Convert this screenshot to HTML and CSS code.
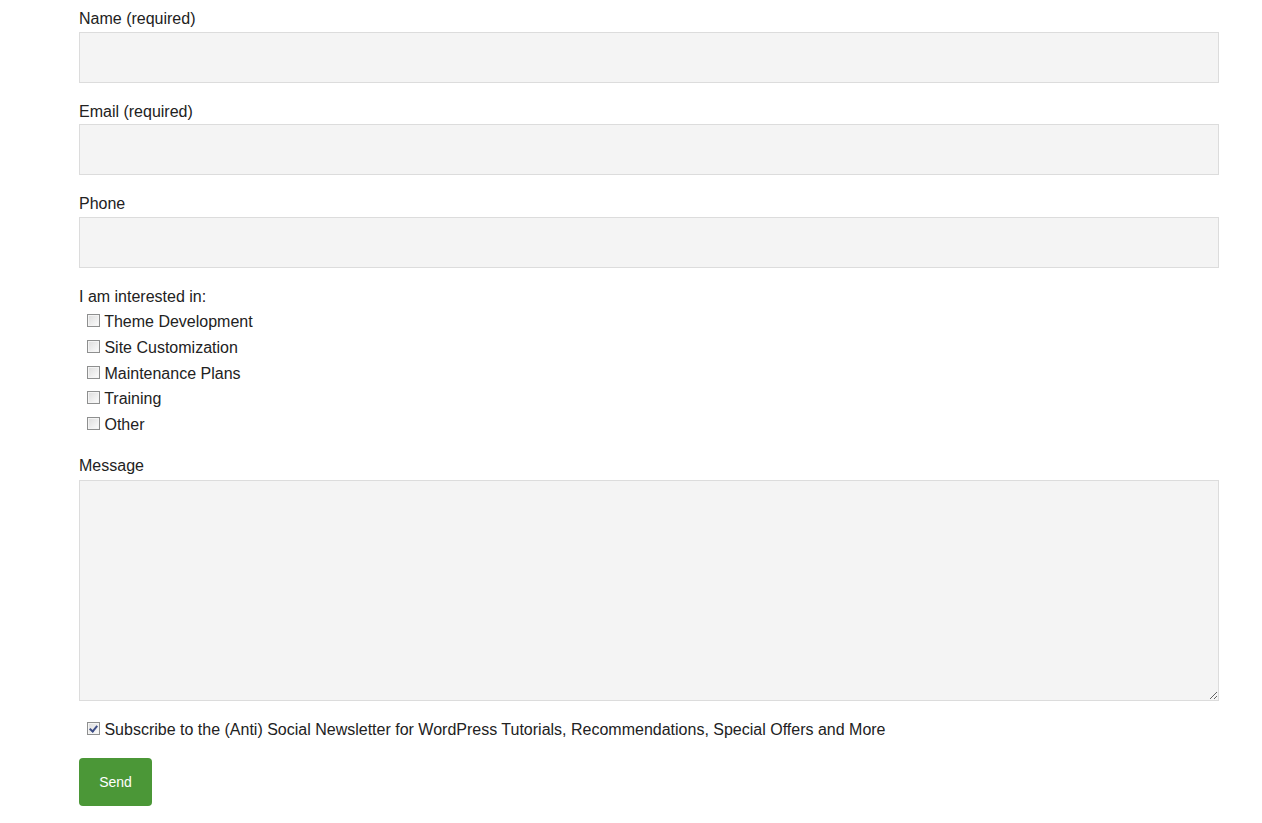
FILE: index.html
```html
<!DOCTYPE html>
<html lang="en">

<head>
    <meta charset="UTF-8">
    <title>Contact</title>
    <link rel="stylesheet" href="styles.css">
</head>

<body>
    <form id="contact_form" class="contact-form">
        <div class="field">
            <label for="f_name">Name (required)</label>
            <input type="text" id="f_name" class="text-input">
        </div>
        <div class="field">
            <label for="f_email">Email (required)</label>
            <input type="email" id="f_email" class="text-input">
        </div>
        <div class="field">
            <label for="f_phone">Phone</label>
            <input type="text" id="f_phone" class="text-input">
        </div>
        <div class="field">
            <span class="group-label">I am interested in:</span>
            <label class="check"><input type="checkbox"> Theme Development</label>
            <label class="check"><input type="checkbox"> Site Customization</label>
            <label class="check"><input type="checkbox"> Maintenance Plans</label>
            <label class="check"><input type="checkbox"> Training</label>
            <label class="check"><input type="checkbox"> Other</label>
        </div>
        <div class="field">
            <label for="f_msg">Message</label>
            <textarea id="f_msg" class="text-area"></textarea>
        </div>
        <div class="field last">
            <label class="check"><input type="checkbox" checked> Subscribe to the (Anti) Social Newsletter for WordPress Tutorials, Recommendations, Special Offers and More</label>
        </div>
        <button type="button" class="send-btn">Send</button>
    </form>
</body>

</html>
```

FILE: styles.css
```css
* {
    margin: 0;
    padding: 0;
    box-sizing: border-box;
}

body {
    font-family: "Liberation Sans", Arial, sans-serif;
    font-size: 16px;
    line-height: 1.6;
    color: #222;
    background: #fff;
}

.contact-form {
    width: 1140px;
    margin-left: 79px;
    padding-top: 6px;
}

.field {
    margin-bottom: 16px;
}

.field.last {
    margin-bottom: 15px;
}

.field > label,
.group-label {
    display: block;
    padding-top: 1px;
    line-height: 24.6px;
}

.text-input {
    display: block;
    width: 100%;
    height: 51px;
    background: #f4f4f4;
    border: 1px solid #dcdcdc;
    outline: none;
    font: inherit;
    padding: 0 10px;
}

.text-area {
    display: block;
    width: 100%;
    height: 221px;
    margin-top: 1px;
    background: #f4f4f4;
    border: 1px solid #dcdcdc;
    outline: none;
    font: inherit;
    padding: 10px;
}

.check {
    display: flex;
    align-items: center;
    gap: 4px;
    padding-left: 8px;
    padding-top: 1px;
    line-height: 24.6px;
}

.check input {
    -webkit-appearance: none;
    appearance: none;
    width: 13px;
    height: 13px;
    border: 1px solid #8e8f8f;
    background: linear-gradient(135deg, #dcdcdc 0%, #f6f6f6 80%, #fff 100%);
    box-shadow: inset 0 0 0 1px #f4f4f4;
    position: relative;
    top: 0;
    flex: none;
}

.check input:checked::after {
    content: "";
    position: absolute;
    left: 3px;
    top: 1px;
    width: 3px;
    height: 6px;
    border: solid #3d4d86;
    border-width: 0 2px 2px 0;
    transform: rotate(40deg);
}

.send-btn {
    display: block;
    width: 73px;
    height: 48px;
    background: #4b9737;
    border: none;
    border-radius: 4px;
    color: #fff;
    font-family: "Liberation Sans", Arial, sans-serif;
    font-size: 14px;
    outline: none;
}
```
